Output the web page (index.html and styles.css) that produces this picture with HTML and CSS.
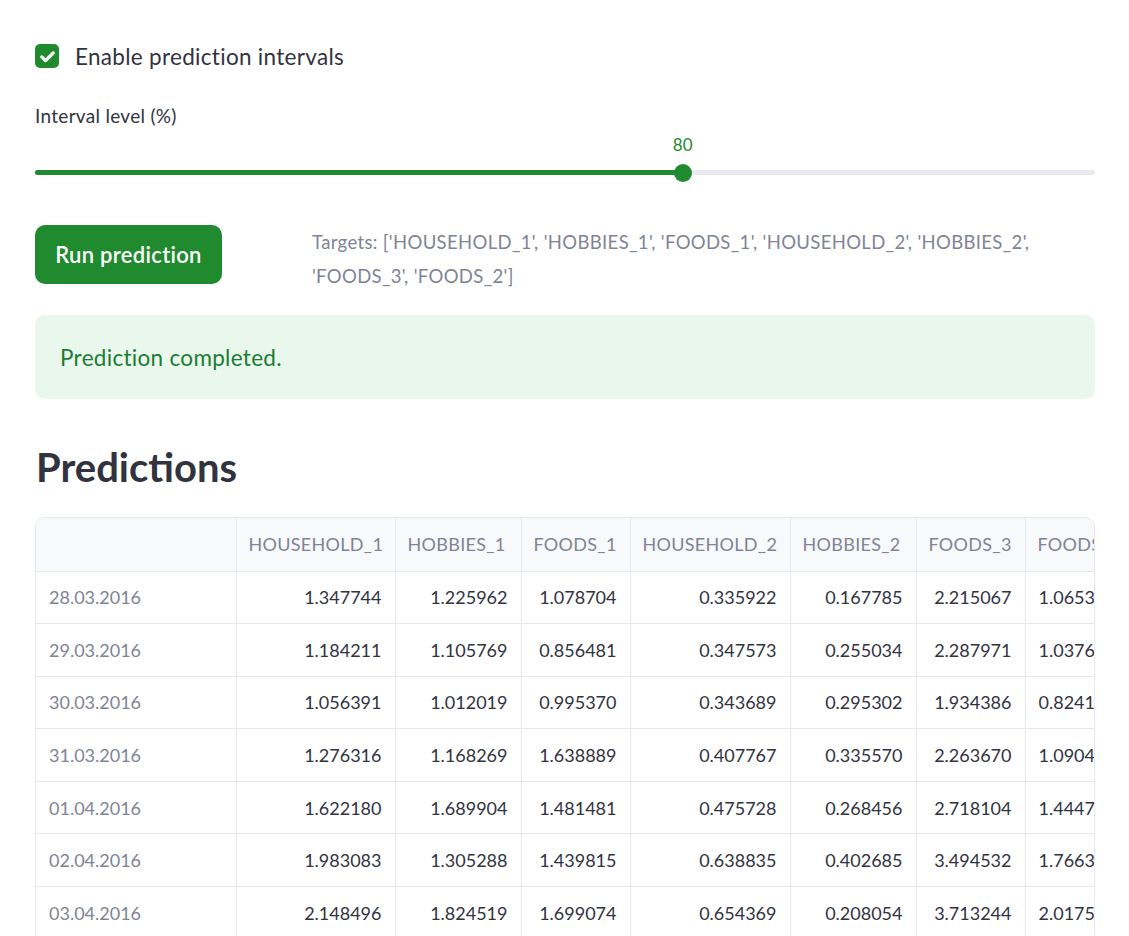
FILE: index.html
```html
<!DOCTYPE html>
<html>
<head>
<meta charset="utf-8">
<link rel="stylesheet" href="styles.css">
</head>
<body>
<main class="page">
  <label class="check">
    <span class="box"><svg viewBox="0 0 24 24" width="21" height="21"><path d="M5.5 12.5l4.2 4.2L18.5 8" fill="none" stroke="#fff" stroke-width="3.8" stroke-linecap="round" stroke-linejoin="round"/></svg></span>
    <span class="check-label">Enable prediction intervals</span>
  </label>

  <div class="slider">
    <div class="slider-label">Interval level (%)</div>
    <div class="slider-area">
      <div class="track">
        <div class="fill" style="width: 61.1%"></div>
        <div class="thumb" style="left: 61.1%"><span class="thumb-value">80</span></div>
      </div>
    </div>
  </div>

  <div class="run-row">
    <button class="run-btn">Run prediction</button>
    <p class="targets">Targets: ['HOUSEHOLD_1', 'HOBBIES_1', 'FOODS_1', 'HOUSEHOLD_2', 'HOBBIES_2', 'FOODS_3', 'FOODS_2']</p>
  </div>

  <div class="success">Prediction completed.</div>

  <h2 class="heading">Predictions</h2>

  <div class="grid-wrap">
    <table class="grid">
      <colgroup>
        <col class="c-idx"><col class="c-h1"><col class="c-b1"><col class="c-f1"><col class="c-h2"><col class="c-b2"><col class="c-f3"><col class="c-f2">
      </colgroup>
      <thead>
        <tr><th></th><th>HOUSEHOLD_1</th><th>HOBBIES_1</th><th>FOODS_1</th><th>HOUSEHOLD_2</th><th>HOBBIES_2</th><th>FOODS_3</th><th>FOODS_2</th></tr>
      </thead>
      <tbody>
        <tr><td class="idx">28.03.2016</td><td>1.347744</td><td>1.225962</td><td>1.078704</td><td>0.335922</td><td>0.167785</td><td>2.215067</td><td>1.065327</td></tr>
        <tr><td class="idx">29.03.2016</td><td>1.184211</td><td>1.105769</td><td>0.856481</td><td>0.347573</td><td>0.255034</td><td>2.287971</td><td>1.037662</td></tr>
        <tr><td class="idx">30.03.2016</td><td>1.056391</td><td>1.012019</td><td>0.995370</td><td>0.343689</td><td>0.295302</td><td>1.934386</td><td>0.824121</td></tr>
        <tr><td class="idx">31.03.2016</td><td>1.276316</td><td>1.168269</td><td>1.638889</td><td>0.407767</td><td>0.335570</td><td>2.263670</td><td>1.090452</td></tr>
        <tr><td class="idx">01.04.2016</td><td>1.622180</td><td>1.689904</td><td>1.481481</td><td>0.475728</td><td>0.268456</td><td>2.718104</td><td>1.444724</td></tr>
        <tr><td class="idx">02.04.2016</td><td>1.983083</td><td>1.305288</td><td>1.439815</td><td>0.638835</td><td>0.402685</td><td>3.494532</td><td>1.766332</td></tr>
        <tr><td class="idx">03.04.2016</td><td>2.148496</td><td>1.824519</td><td>1.699074</td><td>0.654369</td><td>0.208054</td><td>3.713244</td><td>2.017588</td></tr>
      </tbody>
    </table>
  </div>
</main>
</body>
</html>
```
FILE: styles.css
```css
* { box-sizing: border-box; }
html, body { margin: 0; padding: 0; background: #fff; }
body {
  font-family: Lato, "Liberation Sans", sans-serif;
  color: #31333f;
  overflow: hidden;
  height: 936px;
}
.page {
  width: 1060px;
  margin-left: 35px;
  padding-top: 43px;
  display: flex;
  flex-direction: column;
}
.check {
  display: flex;
  align-items: center;
  gap: 16px;
  height: 26px;
}
.box {
  width: 24px;
  height: 24px;
  border-radius: 5px;
  background: #1f8a2e;
  display: flex;
  align-items: center;
  justify-content: center;
}
.check-label {
  font-size: 22.5px;
  color: #31333f;
  letter-spacing: 0.3px;
}
.slider { margin-top: 35px; }
.slider-label {
  font-size: 19px;
  color: #31333f;
  line-height: 24px;
  letter-spacing: 0.3px;
}
.slider-area {
  height: 52px;
  padding-top: 42px;
}
.track {
  position: relative;
  height: 5px;
  border-radius: 3px;
  background: #e9eaee;
}
.fill {
  height: 5px;
  border-radius: 3px;
  background: #1f8a2e;
}
.thumb {
  position: absolute;
  top: -6.5px;
  width: 18px;
  height: 18px;
  margin-left: -9px;
  border-radius: 50%;
  background: #1f8a2e;
}
.thumb-value {
  position: absolute;
  bottom: 27px;
  left: 50%;
  transform: translateX(-50%);
  font-size: 17px;
  color: #1f8a2e;
}
.run-row {
  display: flex;
  align-items: flex-start;
  margin-top: 45px;
}
.run-btn {
  width: 187px;
  height: 59px;
  border: none;
  border-radius: 10px;
  background: #1f8a2e;
  color: #fff;
  font-family: inherit;
  font-size: 22px;
  font-weight: 600;
  letter-spacing: 0.3px;
  padding: 0;
}
.targets {
  margin: 0 0 0 90px;
  width: 750px;
  font-size: 18.5px;
  letter-spacing: 0.35px;
  line-height: 34px;
  color: #808495;
}
.success {
  margin-top: 22px;
  height: 84px;
  border-radius: 10px;
  background: #e9f7ec;
  color: #1b7d33;
  font-size: 22.5px;
  letter-spacing: 0.3px;
  display: flex;
  align-items: center;
  padding-left: 25px;
}
.heading {
  margin: 40px 0 0 1px;
  font-size: 40px;
  font-weight: 700;
  color: #31333f;
  line-height: 56px;
}
.grid-wrap {
  margin-top: 22px;
  width: 1060px;
  border: 1px solid #e6e8ee;
  border-radius: 10px 10px 0 0;
  overflow: hidden;
}
.grid {
  border-collapse: collapse;
  table-layout: fixed;
  width: 1179px;
  font-size: 18px;
}
.c-idx { width: 200px; }
.c-h1 { width: 159px; }
.c-b1 { width: 126px; }
.c-f1 { width: 109px; }
.c-h2 { width: 160px; }
.c-b2 { width: 126px; }
.c-f3 { width: 109px; }
.c-f2 { width: 190px; }
.grid th {
  height: 53px;
  background: #f8f9fb;
  color: #808495;
  font-weight: 400;
  text-align: left;
  padding: 0 12px;
  letter-spacing: 0.3px;
  border-right: 1px solid #e6e8ee;
  border-bottom: 1px solid #e6e8ee;
  white-space: nowrap;
  overflow: hidden;
}
.grid td {
  height: 52.6px;
  padding: 0 13px;
  text-align: right;
  color: #31333f;
  border-right: 1px solid #e6e8ee;
  border-bottom: 1px solid #e6e8ee;
  white-space: nowrap;
  overflow: hidden;
}
.grid td:last-child { text-align: left; }
.grid td.idx {
  text-align: left;
  color: #808495;
}
```
